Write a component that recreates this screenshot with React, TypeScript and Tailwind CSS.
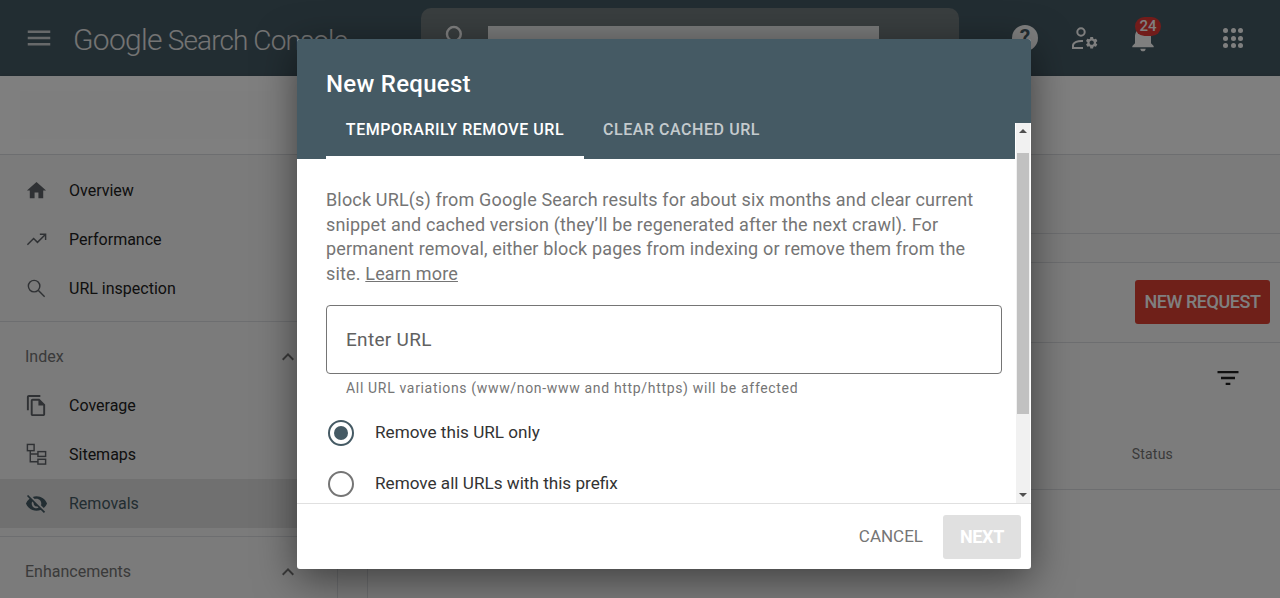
import React from "react";

const Icon = ({ d, className = "" }: { d: string; className?: string }) => (
  <svg viewBox="0 0 24 24" className={className} fill="currentColor"><path d={d} /></svg>
);

const StrokeIcon = ({ children }: { children: React.ReactNode }) => (
  <svg viewBox="0 0 24 24" className="mr-[21px] h-[23px] w-[23px] text-[#5f6368]" fill="none" stroke="currentColor" strokeWidth="1.5">{children}</svg>
);

const NavRow = ({ label, d, active, icon }: { label: string; d?: string; active?: boolean; icon?: React.ReactNode }) => (
  <div className={`flex h-[49px] items-center pl-[25px] text-[16px] ${active ? "bg-[#e0e0e0] text-[#455a64]" : "text-[#212121]"}`}>
    {icon ? icon : <Icon d={d as string} className={`mr-[21px] h-[23px] w-[23px] ${active ? "text-[#455a64]" : "text-[#5f6368]"}`} />}
    <span>{label}</span>
  </div>
);

const Section = ({ label }: { label: string }) => (
  <div className="flex h-[59px] items-center justify-between pl-[25px] pr-[37px] pt-[10px] text-[16px] text-[#757575]">
    <span>{label}</span>
    <svg viewBox="0 0 24 24" className="h-[24px] w-[24px] text-[#757575]" fill="currentColor"><path d="M7.41 15.41 12 10.83l4.59 4.58L18 14l-6-6-6 6z" /></svg>
  </div>
);

const home = "M10 20v-6h4v6h5v-8h3L12 3 2 12h3v8z";
const search = "M15.5 14h-.79l-.28-.27A6.47 6.47 0 0 0 16 9.5 6.5 6.5 0 1 0 9.5 16c1.61 0 3.09-.59 4.23-1.57l.27.28v.79l5 4.99L20.49 19l-4.99-5zm-6 0C7.01 14 5 11.99 5 9.5S7.01 5 9.5 5 14 7.01 14 9.5 11.99 14 9.5 14z";
const copyOutline = "M16 1H4c-1.1 0-2 .9-2 2v14h2V3h12V1zm-1 4H8c-1.1 0-1.99.9-1.99 2L6 21c0 1.1.89 2 1.99 2H19c1.1 0 2-.9 2-2V11l-6-6zM8 21V7h6v5h5v9H8z";
const eyeOff = "M12 7c2.76 0 5 2.24 5 5 0 .65-.13 1.26-.36 1.83l2.92 2.92c1.51-1.26 2.7-2.89 3.43-4.75-1.73-4.39-6-7.5-11-7.5-1.4 0-2.74.25-3.98.7l2.16 2.16C10.74 7.13 11.35 7 12 7zM2 4.27l2.28 2.28.46.46A11.8 11.8 0 0 0 1 12c1.73 4.39 6 7.5 11 7.5 1.55 0 3.03-.3 4.38-.84l.42.42L19.73 22 21 20.73 3.27 3 2 4.27zM7.53 9.8l1.55 1.55c-.05.21-.08.43-.08.65 0 1.66 1.34 3 3 3 .22 0 .44-.03.65-.08l1.55 1.55c-.67.33-1.41.53-2.2.53-2.76 0-5-2.24-5-5 0-.79.2-1.53.53-2.2z";
const gear = "M19.14 12.94c.04-.3.06-.61.06-.94 0-.32-.02-.64-.07-.94l2.03-1.58a.49.49 0 0 0 .12-.61l-1.92-3.32a.488.488 0 0 0-.59-.22l-2.39.96c-.5-.38-1.03-.7-1.62-.94l-.36-2.54a.484.484 0 0 0-.48-.41h-3.84c-.24 0-.43.17-.47.41l-.36 2.54c-.59.24-1.13.57-1.62.94l-2.39-.96c-.22-.08-.47 0-.59.22L2.74 8.87c-.12.21-.08.47.12.61l2.03 1.58c-.05.3-.09.63-.09.94s.02.64.07.94l-2.03 1.58a.49.49 0 0 0-.12.61l1.92 3.32c.12.22.37.29.59.22l2.39-.96c.5.38 1.03.7 1.62.94l.36 2.54c.05.24.24.41.48.41h3.84c.24 0 .44-.17.47-.41l.36-2.54c.59-.24 1.13-.56 1.62-.94l2.39.96c.22.08.47 0 .59-.22l1.92-3.32c.12-.22.07-.47-.12-.61l-2.01-1.58zM12 15.6c-1.98 0-3.6-1.62-3.6-3.6s1.62-3.6 3.6-3.6 3.6 1.62 3.6 3.6-1.62 3.6-3.6 3.6z";

export default function App() {
  return (
    <div className="relative h-[598px] w-[1280px] overflow-hidden bg-white font-['Roboto',sans-serif]">
      <header className="flex h-[76px] items-center bg-[#455a64]">
        <svg viewBox="0 0 24 24" className="ml-[24px] h-[30px] w-[30px] text-[#cfd3d5]" fill="currentColor"><path d="M3 18h18v-2H3v2zm0-5h18v-2H3v2zm0-7v2h18V6H3z" /></svg>
        <div className="ml-[19px] flex w-[274px] translate-y-[1px] items-baseline whitespace-nowrap font-light text-[#e8e8e8]">
          <span className="w-[97px] text-[30px] tracking-[-0.7px]">Google</span>
          <span className="text-[28px] tracking-[-0.9px]">Search Console</span>
        </div>
        <div className="ml-[74px] mt-[8px] flex h-[54px] w-[538px] items-start self-start rounded-[10px] bg-[#727c7f]">
          <svg viewBox="0 0 24 24" className="ml-[21px] mt-[14px] h-[30px] w-[30px] text-white" fill="currentColor"><path d={search} /></svg>
          <div className="ml-[16px] mt-[18px] h-[24px] w-[391px] bg-white opacity-90" />
        </div>
        <div className="ml-[53px] flex h-[26px] w-[26px] items-center justify-center rounded-full bg-white text-[21px] font-bold text-[#455a64]">?</div>
        <svg viewBox="0 0 27 24" className="ml-[33px] h-[24px] w-[27px] text-white" fill="none" stroke="currentColor" strokeWidth="2">
          <circle cx="10" cy="6" r="3.7" />
          <path d="M12 15c-5-.5-10 1.5-10 4.5V22h10" />
          <g transform="translate(13.5 9.5) scale(0.6)"><path d={gear} fill="currentColor" stroke="none" /></g>
        </svg>
        <div className="relative ml-[29px] h-[32px] w-[32px] text-white">
          <svg viewBox="0 0 24 24" className="absolute left-0 top-0 h-[32px] w-[32px]" fill="currentColor"><path d="M12 22c1.1 0 2-.9 2-2h-4c0 1.1.9 2 2 2zm6-6v-5c0-3.07-1.63-5.64-4.5-6.32V4c0-.83-.67-1.5-1.5-1.5s-1.5.67-1.5 1.5v.68C7.64 5.36 6 7.92 6 11v5l-2 2v1h16v-1l-2-2z" /></svg>
          <div className="absolute left-[8px] top-[-5px] flex h-[19px] w-[26px] items-center justify-center rounded-full bg-[#e53935] text-[15px] font-medium text-white">24</div>
        </div>
        <div className="ml-[64px] grid h-[20px] w-[20px] grid-cols-3 gap-[2.5px]">
          {Array.from({ length: 9 }).map((_, i) => (
            <span key={i} className="h-[5px] w-[5px] rounded-full bg-white" />
          ))}
        </div>
      </header>

      <div className="flex h-[79px] items-center border-b border-[#dadce0] bg-white pl-[20px] shadow-[0_2px_4px_rgba(0,0,0,0.3)]">
        <div className="h-[48px] w-[251px] bg-[#fdfdfd]" />
      </div>

      <div className="flex h-[443px]">
        <aside className="w-[338px] shrink-0 border-r border-[#dadce0] bg-[#f6f6f6] pt-[11px]">
          <NavRow label="Overview" d={home} />
          <NavRow
            label="Performance"
            icon={
              <StrokeIcon>
                <path d="M2.5 17.5l6.5-6.5 4 4 8-8M15.5 6.5h6v6" />
              </StrokeIcon>
            }
          />
          <NavRow
            label="URL inspection"
            icon={
              <StrokeIcon>
                <circle cx="9.5" cy="9.5" r="6" />
                <path d="M14 14l6.5 6.5" />
              </StrokeIcon>
            }
          />
          <div className="mt-[8px] border-t border-[#dadce0]" />
          <Section label="Index" />
          <NavRow label="Coverage" d={copyOutline} />
          <NavRow
            label="Sitemaps"
            icon={
              <StrokeIcon>
                <rect x="2.5" y="1.5" width="7" height="6.5" />
                <rect x="13.5" y="9" width="8" height="5" />
                <rect x="13.5" y="17" width="8" height="5" />
                <path d="M5.5 8v11.5h8M5.5 11.5h8" />
              </StrokeIcon>
            }
          />
          <NavRow label="Removals" d={eyeOff} active />
          <div className="mt-[8px] border-t border-[#dadce0]" />
          <Section label="Enhancements" />
        </aside>
        <main className="flex flex-1 flex-col bg-[#f7f7f7] pl-[29px]">
          <div className="h-[79px] shrink-0 border-b border-[#dadce0]" />
          <div className="h-[28px] shrink-0" />
          <div className="flex-1 border-l border-t border-[#dadce0] bg-[#f9f9f9]">
            <div className="flex h-[80px] items-center justify-end border-b border-[#dadce0] pr-[10px]">
              <div className="flex h-[44px] w-[135px] -translate-y-[1px] items-center justify-center rounded-[3px] bg-[#df4032] text-[18px] font-medium tracking-[-0.45px] text-white">NEW REQUEST</div>
            </div>
            <div className="flex h-[68px] items-center justify-end pr-[38px] pt-[1px]">
              <svg viewBox="0 0 24 24" className="h-[28px] w-[28px] text-[#212121]" fill="currentColor"><path d="M10 18h4v-2h-4v2zM3 6v2h18V6H3zm3 7h12v-2H6v2z" /></svg>
            </div>
            <div className="flex h-[79px] items-center justify-end border-b border-[#dadce0] pr-[107px] pt-[9px] text-[14px] tracking-[0.2px] text-[#757575]">Status</div>
          </div>
        </main>
      </div>

      <div className="absolute inset-0 bg-black/50" />

      <div className="absolute left-[297px] top-[39px] flex h-[530px] w-[734px] flex-col overflow-hidden rounded-[3px] bg-white shadow-[0_10px_40px_rgba(0,0,0,0.5)]">
        <div className="h-[120px] shrink-0 bg-[#455a64] pl-[29px] pt-[28px] text-white">
          <h2 className="text-[24px] font-medium leading-[34px] tracking-[0.28px]">New Request</h2>
          <div className="mt-[13px] flex h-[45px] text-[16px] font-medium tracking-[0.55px]">
            <div className="flex w-[258px] items-start justify-center border-b-[3px] border-white pt-[4px]">TEMPORARILY REMOVE URL</div>
            <div className="ml-[19px] pt-[4px] text-white/70">CLEAR CACHED URL</div>
          </div>
        </div>

        <div className="min-h-0 flex-1 pl-[29px] pr-[29px] pt-[29px]">
          <p className="w-[665px] text-[18px] leading-[24.5px] tracking-[0.16px] text-[#757575]">
            Block URL(s) from Google Search results for about six months and clear current snippet and cached version (they’ll be regenerated after the next crawl). For permanent removal, either block pages from indexing or remove them from the site. <span className="underline">Learn more</span>
          </p>
          <div className="mt-[19px] flex h-[69px] w-[676px] items-center rounded-[4px] border border-[#757575] pl-[19px] pt-[2px] text-[19px] tracking-[0.3px] text-[#616161]">Enter URL</div>
          <p className="mt-[6px] pl-[20px] text-[14px] leading-[16px] tracking-[0.67px] text-[#757575]">All URL variations (www/non-www and http/https) will be affected</p>
          <div className="mt-[24px] flex h-[26px] items-center pl-[2px]">
            <span className="flex h-[26px] w-[26px] items-center justify-center rounded-full border-2 border-[#455a64]">
              <span className="h-[14px] w-[14px] rounded-full bg-[#455a64]" />
            </span>
            <span className="ml-[21px] text-[17.15px] text-[#333333]">Remove this URL only</span>
          </div>
          <div className="mt-[25px] flex h-[26px] items-center pl-[2px]">
            <span className="h-[26px] w-[26px] rounded-full border-2 border-[#757575]" />
            <span className="ml-[21px] text-[17.15px] text-[#333333]">Remove all URLs with this prefix</span>
          </div>
        </div>

        <div className="flex h-[66px] shrink-0 items-center justify-end border-t border-[#e0e0e0] pr-[10px]">
          <span className="pt-[1px] text-[17px] text-[#757575]">CANCEL</span>
          <div className="ml-[20px] flex h-[44px] w-[78px] items-center justify-center rounded-[3px] bg-[#e0e0e0] text-[18px] font-bold tracking-[-0.3px] text-white">NEXT</div>
        </div>

        <div className="absolute right-0 top-[84px] flex h-[380px] w-[16px] flex-col border-x border-white bg-[#f1f1f1]">
          <div className="flex h-[16px] items-center justify-center">
            <span className="h-0 w-0 border-x-[4px] border-b-[4px] border-x-transparent border-b-[#505050]" />
          </div>
          <div className="mx-[1px] mt-[14px] h-[261px] bg-[#c1c1c1]" />
          <div className="flex-1" />
          <div className="flex h-[16px] items-center justify-center">
            <span className="h-0 w-0 border-x-[4px] border-t-[4px] border-x-transparent border-t-[#505050]" />
          </div>
        </div>
      </div>
    </div>
  );
}
